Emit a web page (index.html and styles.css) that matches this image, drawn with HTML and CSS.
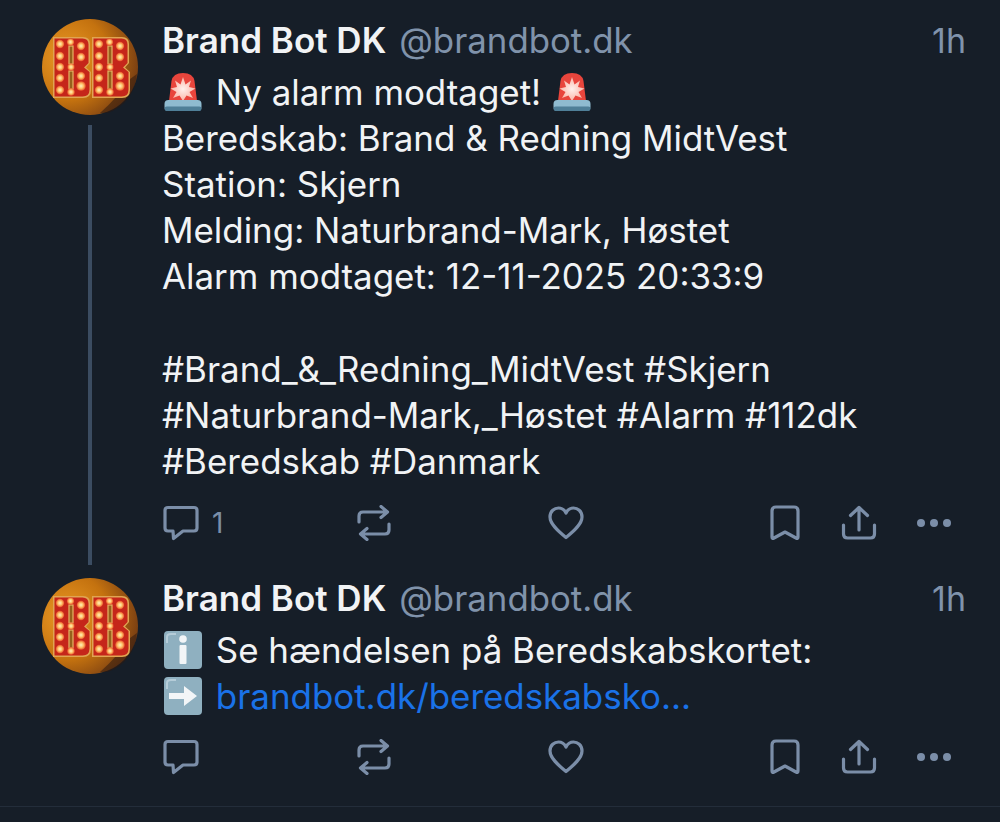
FILE: index.html
```html
<!DOCTYPE html>
<html>
<head>
    <meta charset="UTF-8">
    <meta name="viewport" content="width=device-width, initial-scale=1.0">
    <title>Brand Bot DK</title>
    <link rel="stylesheet" href="styles.css">
</head>
<body>
    <svg class="defs" width="0" height="0">
        <defs>
            <radialGradient id="av-bg" cx="25%" cy="40%" r="90%">
                <stop offset="0" stop-color="#eb9a25"/>
                <stop offset="0.5" stop-color="#c4720f"/>
                <stop offset="0.85" stop-color="#7a3f12"/>
                <stop offset="1" stop-color="#3c2012"/>
            </radialGradient>
            <radialGradient id="bulb">
                <stop offset="0" stop-color="#fff0c0"/>
                <stop offset="0.5" stop-color="#ffc46a"/>
                <stop offset="1" stop-color="#e8502a"/>
            </radialGradient>
            <radialGradient id="flash">
                <stop offset="0" stop-color="#fff1ec"/>
                <stop offset="1" stop-color="#fbb6a8"/>
            </radialGradient>
            <g id="bb-letter">
                <path d="M0 0H30Q37 0 37 7V26L33 30.500L38 35V53Q38 61 30 61H0Z" fill="#e0a552"/>
                <path d="M1.500 1.500H29.500Q35.500 1.500 35.500 7.500V26L31 30.500L36.500 35V52.500Q36.500 59.500 29.500 59.500H1.500Z" fill="#c5261a"/>
                <rect x="16" y="9" width="4" height="18" fill="#96601c" stroke="#e6b565" stroke-width="1.200"/>
                <rect x="16" y="34" width="4" height="18" fill="#96601c" stroke="#e6b565" stroke-width="1.200"/>
                <g fill="url(#bulb)">
                    <circle cx="7" cy="7" r="4.200"/><circle cx="17.500" cy="5" r="3.600"/><circle cx="28" cy="9" r="4.200"/>
                    <circle cx="7" cy="19" r="4.200"/><circle cx="28" cy="20" r="4.200"/>
                    <circle cx="7" cy="30" r="4.200"/><circle cx="18" cy="30" r="3.600"/>
                    <circle cx="7" cy="41" r="4.200"/><circle cx="28" cy="39" r="4.200"/>
                    <circle cx="7" cy="53" r="4.200"/><circle cx="28" cy="49" r="4.800"/><circle cx="18" cy="55" r="3.800"/>
                </g>
            </g>
            <symbol id="avatar" viewBox="0 0 96 96">
                <circle cx="48" cy="48" r="48" fill="url(#av-bg)"/>
                <path d="M58 94Q76 78 88 60L95 55Q92 84 66 94Z" fill="#2e1a10" opacity=".55"/>
                <use href="#bb-letter" x="11" y="18"/>
                <use href="#bb-letter" x="50" y="18"/>
            </symbol>
            <symbol id="siren" viewBox="0 0 38 38">
                <path d="M5 28L7.500 8Q9 0 19 0Q29 0 30.500 8L33 28Z" fill="#e8453c"/>
                <path d="M19 4L21.500 11.500L27 7.500L25 14L31.500 15.500L25.500 19L29 25L22.500 22.500L19 28L15.500 22.500L9 25L12.500 19L6.500 15.500L13 14L11 7.500L16.500 11.500Z" fill="url(#flash)"/>
                <rect x="0.500" y="27" width="37" height="11" rx="4" fill="#8fbbd0"/>
                <rect x="0.500" y="33.500" width="37" height="4.500" rx="2.200" fill="#4f7f98"/>
            </symbol>
            <symbol id="info" viewBox="0 0 38 38">
                <rect x="0" y="0" width="38" height="38" rx="4" fill="#8fb0c0"/>
                <path d="M3 12V6Q3 3 7 3H12" fill="none" stroke="#b5ccd8" stroke-width="2"/>
                <rect x="15.500" y="14" width="7" height="19" rx="1" fill="#f2f5f7"/>
                <circle cx="19" cy="8" r="3.800" fill="#f2f5f7"/>
            </symbol>
            <symbol id="arrow" viewBox="0 0 38 38">
                <rect x="0" y="0" width="38" height="38" rx="4" fill="#8fb0c0"/>
                <path d="M3 12V6Q3 3 7 3H12" fill="none" stroke="#b5ccd8" stroke-width="2"/>
                <path d="M5 16H20V9L33 19L20 29V22H5Z" fill="#f2f5f7"/>
            </symbol>
            <symbol id="i-reply" viewBox="0 0 36 36">
                <path d="M5 2.500H31Q34 2.500 34 5.500V23Q34 26 31 26H20L10.500 33.500L10 26H5Q2 26 2 23V5.500Q2 2.500 5 2.500Z"/>
            </symbol>
            <symbol id="i-repost" viewBox="0 0 36 36">
                <path d="M3 17V11Q3 7 7 7H31M25 1.500L31.500 7L25 12.500"/>
                <path d="M33 19V25Q33 29 29 29H5M11 23.500L4.500 29L11 34.500"/>
            </symbol>
            <symbol id="i-heart" viewBox="0 0 36 36">
                <path d="M18 32.500C10 26 2 19 2 12C2 6 6.500 3 10.500 3C14 3 16.500 5 18 8C19.500 5 22 3 25.500 3C29.500 3 34 6 34 12C34 19 26 26 18 32.500Z"/>
            </symbol>
            <symbol id="i-bookmark" viewBox="0 0 30 36">
                <path d="M2 6Q2 2 6 2H24Q28 2 28 6V32Q28 34 26 33L15 27L4 33Q2 34 2 32Z"/>
            </symbol>
            <symbol id="i-share" viewBox="0 0 36 36">
                <path d="M18 25V3M9.500 10.500L18 2.500L26.500 10.500"/>
                <path d="M2.500 20V29Q2.500 33 6.500 33H29.500Q33.500 33 33.500 29V20"/>
            </symbol>
        </defs>
    </svg>

    <div class="feed">
        <div class="post first">
            <div class="side">
                <svg class="avatar"><use href="#avatar"/></svg>
                <div class="thread-line"></div>
            </div>
            <div class="main">
                <div class="head">
                    <span class="name">Brand Bot DK</span>
                    <span class="handle">@brandbot.dk</span>
                    <span class="time">1h</span>
                </div>
                <div class="text">
                    <div><svg class="emoji"><use href="#siren"/></svg> Ny alarm modtaget! <svg class="emoji"><use href="#siren"/></svg></div>
                    <div>Beredskab: Brand &amp; Redning MidtVest</div>
                    <div>Station: Skjern</div>
                    <div>Melding: Naturbrand-Mark, Høstet</div>
                    <div>Alarm modtaget: 12-11-2025 20:33:9</div>
                    <div class="blank"></div>
                    <div>#Brand_&amp;_Redning_MidtVest #Skjern</div>
                    <div>#Naturbrand-Mark,_Høstet #Alarm #112dk</div>
                    <div>#Beredskab #Danmark</div>
                </div>
                <div class="actions">
                    <div class="act"><svg class="ic ic-reply"><use href="#i-reply"/></svg><span class="count">1</span></div>
                    <div class="act"><svg class="ic ic-repost"><use href="#i-repost"/></svg></div>
                    <div class="act"><svg class="ic ic-heart"><use href="#i-heart"/></svg></div>
                    <div class="act-right">
                        <svg class="ic ic-bookmark"><use href="#i-bookmark"/></svg>
                        <svg class="ic ic-share"><use href="#i-share"/></svg>
                        <div class="dots"><span></span><span></span><span></span></div>
                    </div>
                </div>
            </div>
        </div>

        <div class="post second">
            <div class="side">
                <svg class="avatar"><use href="#avatar"/></svg>
            </div>
            <div class="main">
                <div class="head">
                    <span class="name">Brand Bot DK</span>
                    <span class="handle">@brandbot.dk</span>
                    <span class="time">1h</span>
                </div>
                <div class="text">
                    <div><svg class="emoji"><use href="#info"/></svg> Se hændelsen på Beredskabskortet:</div>
                    <div><svg class="emoji"><use href="#arrow"/></svg> <a class="link" href="#">brandbot.dk/beredskabsko...</a></div>
                </div>
                <div class="actions">
                    <div class="act"><svg class="ic ic-reply"><use href="#i-reply"/></svg></div>
                    <div class="act"><svg class="ic ic-repost"><use href="#i-repost"/></svg></div>
                    <div class="act"><svg class="ic ic-heart"><use href="#i-heart"/></svg></div>
                    <div class="act-right">
                        <svg class="ic ic-bookmark"><use href="#i-bookmark"/></svg>
                        <svg class="ic ic-share"><use href="#i-share"/></svg>
                        <div class="dots"><span></span><span></span><span></span></div>
                    </div>
                </div>
            </div>
        </div>
    </div>
</body>
</html>
```

FILE: styles.css
```css
html, body {
    margin: 0;
    height: 100%;
    background: #161e28;
    overflow: hidden;
}

.defs {
    position: absolute;
}

.feed {
    font-family: "Inter", "Liberation Sans", sans-serif;
    color: #f1f3f5;
}

.post {
    display: flex;
    padding: 0 34px 0 42px;
}

.post.first {
    padding-top: 19px;
    padding-bottom: 22px;
}

.post.second {
    padding-top: 12px;
    padding-bottom: 29px;
    border-bottom: 1px solid #232d3a;
}

.post.second .avatar {
    margin-top: 1px;
}

.post.second .actions {
    margin-top: 18px;
}

.side {
    width: 96px;
    margin-right: 24px;
    display: flex;
    flex-direction: column;
    align-items: center;
    flex-shrink: 0;
}

.avatar {
    width: 96px;
    height: 96px;
    display: block;
}

.thread-line {
    flex: 1;
    width: 4px;
    margin-top: 10px;
    margin-bottom: -22px;
    background: #3b4c61;
}

.main {
    flex: 1;
    min-width: 0;
}

.head {
    display: flex;
    align-items: center;
    height: 42px;
    margin-bottom: 8px;
    font-size: 35px;
}

.name {
    font-weight: 600;
    margin-right: 13px;
}

.handle {
    font-size: 34.8px;
    color: #8093ab;
}

.time {
    margin-left: auto;
    font-size: 34px;
    color: #8093ab;
}

.text {
    font-size: 34.9px;
    line-height: 46px;
}

.blank {
    height: 47px;
}

.emoji {
    width: 38px;
    height: 38px;
    margin-left: 2px;
    margin-right: 4px;
    vertical-align: -6px;
}

.link {
    color: #1a72e8;
    text-decoration: none;
}

.actions {
    display: flex;
    align-items: center;
    height: 40px;
    margin-top: 19px;
    margin-left: 1px;
    color: #7b8ea8;
}

.act {
    width: 192.5px;
    display: flex;
    align-items: center;
}

.act-right {
    margin-left: auto;
    margin-right: 15px;
    display: flex;
    align-items: center;
}

.ic {
    fill: none;
    stroke: #7b8ea8;
    stroke-width: 3.2px;
    stroke-linecap: round;
    stroke-linejoin: round;
    height: 36px;
    width: 36px;
    display: block;
}

.ic-bookmark {
    width: 30px;
    margin-right: 41px;
}

.ic-share {
    margin-right: 40px;
}

.count {
    font-size: 28px;
    margin-left: 13px;
}

.dots {
    display: flex;
    gap: 5px;
}

.dots span {
    width: 8px;
    height: 8px;
    border-radius: 50%;
    background: #7b8ea8;
}
```
